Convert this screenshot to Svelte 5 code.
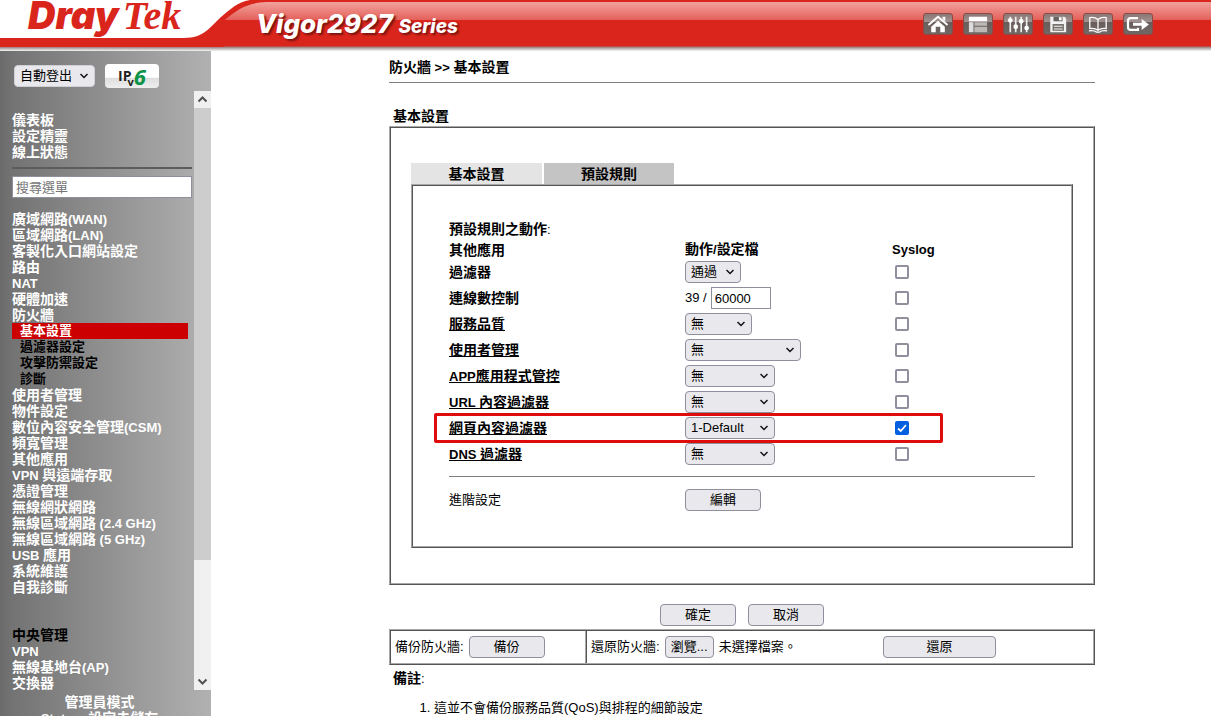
<script lang="ts">
  type Rule = {
    id: string;
    name: string;
    link: boolean;
    options?: string[];
    size?: string;
    marked?: boolean;
  };

  const statusLinks = ["儀表板", "設定精靈", "線上狀態"];
  const beforeFirewall = ["廣域網路(WAN)", "區域網路(LAN)", "客製化入口網站設定", "路由", "NAT", "硬體加速", "防火牆"];
  const firewallLinks = ["基本設置", "過濾器設定", "攻擊防禦設定", "診斷"];
  const afterFirewall = [
    "使用者管理", "物件設定", "數位內容安全管理(CSM)", "頻寬管理", "其他應用", "VPN 與遠端存取",
    "憑證管理", "無線網狀網路", "無線區域網路 (2.4 GHz)", "無線區域網路 (5 GHz)", "USB 應用",
    "系統維護", "自我診斷",
  ];
  const centralLinks = ["VPN", "無線基地台(AP)", "交換器"];

  const rules: Rule[] = [
    { id: "filter", name: "過濾器", link: false, options: ["通過", "封鎖"], size: "tiny" },
    { id: "sessions", name: "連線數控制", link: false },
    { id: "qos", name: "服務品質", link: true, options: ["無"], size: "small" },
    { id: "users", name: "使用者管理", link: true, options: ["無"], size: "large" },
    { id: "app", name: "APP應用程式管控", link: true, options: ["無"], size: "medium" },
    { id: "url", name: "URL 內容過濾器", link: true, options: ["無"], size: "medium" },
    { id: "web", name: "網頁內容過濾器", link: true, options: ["1-Default", "無"], size: "medium", marked: true },
    { id: "dns", name: "DNS 過濾器", link: true, options: ["無"], size: "medium" },
  ];

  let syslog: Record<string, boolean> = $state({ web: true });
  let sessions = $state("60000");
  let fileName = $state("未選擇檔案。");

  // Latin runs are set one size below the Chinese text
  function runs(text: string): string[] {
    return text.split(/([\x20-\x7e]+)/);
  }

  function pickFile(e: Event): void {
    const files = (e.currentTarget as HTMLInputElement).files;
    fileName = files && files[0] ? files[0].name : "未選擇檔案。";
  }
</script>

{#snippet mixed(text: string)}{#each runs(text) as part, i}{#if i % 2}<span class="latin">{part}</span>{:else}{part}{/if}{/each}{/snippet}

{#snippet menu(items: string[])}
  {#each items as item}
    <li><a href="#menu">{@render mixed(item)}</a></li>
  {/each}
{/snippet}

<div class="page">
  <header class="banner">
    <svg class="swoosh" width="280" height="47" viewBox="0 0 280 47" aria-hidden="true">
      <path d="M0 0H280V2H266C247 3 238 9 224 20.500V47H0Z" fill="#da251c" />
      <path d="M0 0H250C237 2 231 9 221 17C210 27 204 38 184 38H0Z" fill="#fff" />
    </svg>
    <div class="logo"><span class="dray">Dray</span><span class="tek">Tek</span></div>
    <h1 class="model">Vigor2927 <small>Series</small></h1>
    <nav class="tools">
      <button aria-label="首頁">
        <svg viewBox="0 0 30 22"><path d="M4.500 12L15 3L25.500 12" fill="none" stroke="#fff" stroke-width="2.200" /><path d="M20 3h3v5l-3-2.500zM15 7.500l7.500 6.500V20h-5v-6h-5v6h-5v-6z" fill="#fff" /></svg>
      </button>
      <button aria-label="版面">
        <svg viewBox="0 0 30 22"><path d="M5 3h20v5H5z" fill="#fff" /><path d="M5 9h5v11H5z" fill="#ddd" /><path d="M11 9h14v4H11zM11 14h14v6H11z" fill="#bcb8b6" /></svg>
      </button>
      <button aria-label="設定">
        <svg viewBox="0 0 30 22"><path d="M6.500 3v17M12.500 3v17M18.500 3v17M24.500 3v17" stroke="#eee" stroke-width="1.800" /><g fill="#fff"><circle cx="6.500" cy="7" r="2.600" /><circle cx="12.500" cy="14" r="2.600" /><circle cx="18.500" cy="8" r="2.600" /><circle cx="24.500" cy="15.500" r="2.600" /></g></svg>
      </button>
      <button aria-label="儲存">
        <svg viewBox="0 0 30 22"><path d="M6.500 3H22l2 2v15H6.500z" fill="#f2f2f2" /><path d="M10 3h10v5H10z" fill="#676260" /><path d="M16 3.500h3V7h-3z" fill="#fff" /><path d="M9 11h12.500v7.500H9z" fill="#77716f" /><path d="M10.500 13.500h9.500M10.500 16.500h9.500" stroke="#fff" /></svg>
      </button>
      <button aria-label="說明">
        <svg viewBox="0 0 30 22"><path d="M15 6C12.500 4 9 3.500 6 4v12c3-.5 6.500 0 9 2c2.500-2 6-2.500 9-2V4c-3-.5-6.500 0-9 2zV18M5 18.500c4-.5 7 0 8.500 1.500h3c1.500-1.500 4.500-2 8.500-1.500" fill="none" stroke="#fff" stroke-width="1.400" /></svg>
      </button>
      <button aria-label="登出">
        <svg viewBox="0 0 30 22"><path d="M15 4.500H7Q4 4.500 4 7.500v7Q4 17.500 7 17.500H15V15" fill="none" stroke="#fff" stroke-width="2.400" /><path d="M9.500 9.500h9.500V5.500l8 6L19 17.500v-4.500H9.500z" fill="#fff" /></svg>
      </button>
    </nav>
  </header>

  <div class="body">
    <aside class="sidebar">
      <div class="session">
        <select class="logout" aria-label="自動登出"><option>自動登出</option></select>
        <button class="ipv6" aria-label="IPv6"><span class="ip">IP</span><span class="v">v</span><span class="six">6</span></button>
      </div>
      <div class="scroller">
        <nav class="menu">
          <ul>{@render menu(statusLinks)}</ul>
          <hr />
          <input class="search" type="text" placeholder="搜尋選單" aria-label="搜尋選單" />
          <ul>
            {@render menu(beforeFirewall)}
            {#each firewallLinks as item, i}
              <li class="sub" class:active={i === 0}><a href="#firewall">{item}</a></li>
            {/each}
            {@render menu(afterFirewall)}
          </ul>
          <ul class="central">
            <li class="group">中央管理</li>
            {@render menu(centralLinks)}
          </ul>
        </nav>
        <div class="scrollbar" aria-hidden="true">
          <svg width="17" height="17" viewBox="0 0 17 17"><path d="M4.500 10.500L8.500 6.500L12.500 10.500" /></svg>
          <div class="track"><div class="thumb"></div></div>
          <svg width="17" height="17" viewBox="0 0 17 17"><path d="M4.500 6.500L8.500 10.500L12.500 6.500" /></svg>
        </div>
      </div>
      <footer class="mode">
        <div>管理員模式</div>
        <div>{@render mixed("Status: 設定未儲存")}</div>
      </footer>
    </aside>

    <main>
      <div class="crumbs">{@render mixed("防火牆 >> 基本設置")}</div>
      <h2>基本設置</h2>

      <section class="panel">
        <div class="tabs">
          <button class="tab">基本設置</button>
          <button class="tab selected">預設規則</button>
        </div>
        <div class="sheet">
          <table class="rules">
            <caption>{@render mixed("預設規則之動作:")}</caption>
            <colgroup><col class="name" /><col class="action" /><col /></colgroup>
            <thead>
              <tr><th>其他應用</th><th>{@render mixed("動作/設定檔")}</th><th>{@render mixed("Syslog")}</th></tr>
            </thead>
            <tbody>
              {#each rules as rule}
                <tr>
                  <th>
                    {#if rule.link}
                      <a href="#{rule.id}">{@render mixed(rule.name)}</a>
                    {:else}
                      {rule.name}
                    {/if}
                    {#if rule.marked}<span class="marker"></span>{/if}
                  </th>
                  <td>
                    {#if rule.options}
                      <select class={rule.size} aria-label={rule.name}>
                        {#each rule.options as option}<option>{option}</option>{/each}
                      </select>
                    {:else}
                      <label class="limit">39 / <input type="text" bind:value={sessions} /></label>
                    {/if}
                  </td>
                  <td class="log">
                    <input type="checkbox" bind:checked={syslog[rule.id]} aria-label="{rule.name} Syslog" />
                  </td>
                </tr>
              {/each}
            </tbody>
          </table>
          <div class="advanced">
            <span>進階設定</span>
            <button class="btn">編輯</button>
          </div>
        </div>
      </section>

      <div class="actions">
        <button class="btn">確定</button>
        <button class="btn">取消</button>
      </div>

      <div class="backup">
        <div class="save">備份防火牆: <button class="btn">備份</button></div>
        <div class="restore">
          <span>還原防火牆:</span>
          <label class="btn browse">瀏覽...<input type="file" onchange={pickFile} /></label>
          <span class="file">{fileName}</span>
          <button class="btn wide">還原</button>
        </div>
      </div>

      <h3>{@render mixed("備註:")}</h3>
      <ol>
        <li>這並不會備份服務品質(QoS)與排程的細節設定</li>
      </ol>
    </main>
  </div>
</div>

<style>
  :global(body) {
    margin: 0;
    background: #fff;
  }

  .page {
    display: flex;
    flex-direction: column;
    height: 100vh;
    overflow: hidden;
    color: #000;
    font-family: "Liberation Sans", "Noto Sans CJK TC", sans-serif;
    font-size: 13px;
    line-height: 16px;
  }

  .page * {
    box-sizing: border-box;
  }

  button, input, select {
    font: inherit;
    color: inherit;
    margin: 0;
  }

  a {
    color: inherit;
  }

  .latin {
    font-size: 13px;
  }

  /* banner */
  .banner {
    position: relative;
    display: flex;
    flex: none;
    height: 51px;
    padding-right: 58px;
    background: linear-gradient(#da251c 2px, #f2a29d 2px, #e4605a 20px, #da251c 20px, #da251c 46px, #9c7a78 47px, #c4c0c0 49px, #f4f4f4 51px);
  }

  .swoosh {
    position: absolute;
    left: 0;
    top: 0;
  }

  .logo {
    position: relative;
    width: 228px;
    padding-left: 28px;
    color: #da251c;
    font-style: italic;
    line-height: 30px;
    white-space: nowrap;
  }

  .dray {
    font-family: Inter, sans-serif;
    font-size: 38px;
    font-weight: 900;
  }

  .tek {
    margin-left: 4px;
    font-family: "Liberation Serif", serif;
    font-size: 40px;
    font-weight: 700;
  }

  .model {
    position: relative;
    flex: 1;
    margin: 0;
    padding-left: 28px;
    color: #fff;
    font-family: Inter, sans-serif;
    font-size: 26px;
    font-weight: 800;
    font-style: italic;
    line-height: 48px;
    text-shadow: 2px 2px 2px #7c1510;
    white-space: nowrap;
  }

  .model small {
    font-size: 19px;
  }

  .tools {
    display: flex;
    gap: 10px;
    padding-top: 13px;
  }

  .tools button {
    width: 30px;
    height: 22px;
    padding: 0;
    border: 1px solid #8d4a45;
    border-radius: 3px;
    background: linear-gradient(#8b7775, #a09391 8px, #685d5b 8px, #716866);
  }

  .tools svg {
    display: block;
    width: 28px;
    height: 20px;
  }

  /* sidebar */
  .body {
    display: flex;
    flex: 1;
    min-height: 0;
  }

  .sidebar {
    display: flex;
    flex: none;
    flex-direction: column;
    width: 211px;
    background: linear-gradient(90deg, #6b6b6b, #737373 12px, #b1b1b1);
    color: #fff;
    font-size: 14px;
    font-weight: 700;
  }

  .session {
    display: flex;
    align-items: center;
    gap: 10px;
    height: 40px;
    padding: 10px 14px 0;
  }

  .ipv6 {
    display: flex;
    align-items: center;
    justify-content: center;
    width: 54px;
    height: 24px;
    padding: 0;
    border: 0;
    border-radius: 4px;
    background: linear-gradient(#fff 55%, #dedede 60%, #eee);
    color: #222;
    font-family: "Open Sans", sans-serif;
  }

  .ipv6 .v {
    align-self: flex-end;
    margin-left: -4px;
    font-size: 11px;
    line-height: 12px;
  }

  .ipv6 .six {
    color: #0d9347;
    font-size: 22px;
    font-style: italic;
    line-height: 24px;
  }

  .scroller {
    display: flex;
    flex: 1;
    min-height: 0;
  }

  .menu {
    flex: 1;
    padding: 21px 2px 0 12px;
    overflow: hidden;
    white-space: nowrap;
  }

  .menu ul {
    margin: 0;
    padding: 0;
    list-style: none;
  }

  .menu a {
    display: block;
    height: 16px;
    text-decoration: none;
  }

  .menu hr {
    height: 2px;
    margin: 7px 0 7px;
    border: 0;
    background: #5c5c5c;
  }

  .search {
    display: block;
    width: 100%;
    height: 22px;
    margin-bottom: 13px;
    padding: 0 3px;
    border: 1px solid #8f8f9d;
    background: #fff;
    color: #000;
    font-size: 13px;
    font-weight: 400;
  }

  .search::placeholder {
    color: #757575;
  }

  .menu .sub {
    margin-right: 4px;
    padding-left: 8px;
    color: #000;
    font-size: 13px;
  }

  .menu .active {
    background: #c00;
    color: #fff;
  }

  .menu .central {
    margin-top: 32px;
  }

  .group {
    height: 16px;
    color: #000;
  }

  .scrollbar {
    display: flex;
    flex-direction: column;
    width: 17px;
    background: #f0f0f0;
  }

  .scrollbar path {
    fill: none;
    stroke: #505050;
    stroke-width: 2;
  }

  .track {
    flex: 1;
  }

  .thumb {
    height: 80%;
    background: #cdcdcd;
  }

  .mode {
    height: 26px;
    padding: 4px 12px 0 0;
    overflow: hidden;
    text-align: center;
  }

  /* shared controls */
  select {
    height: 22px;
    padding: 0 20px 0 5px;
    border: 1px solid #8f8f9d;
    border-radius: 4px;
    appearance: none;
    background: #e9e9ed url("data:image/svg+xml,%3Csvg xmlns='http://www.w3.org/2000/svg' width='8' height='6'%3E%3Cpath d='M.5 1L4 4.500L7.500 1' fill='none' stroke='%23111' stroke-width='1.500'/%3E%3C/svg%3E") no-repeat right 6px center;
    color: #000;
    font-size: 13px;
    font-weight: 400;
  }

  .logout {
    width: 81px;
    border-color: #d0d0d7;
  }

  .tiny {
    width: 56px;
  }

  .small {
    width: 67px;
  }

  .medium {
    width: 90px;
  }

  .large {
    width: 116px;
  }

  .btn {
    width: 76px;
    height: 22px;
    padding: 0;
    border: 1px solid #8f8f9d;
    border-radius: 4px;
    background: #e9e9ed;
    text-align: center;
  }

  /* content */
  main {
    flex: 1;
    min-width: 0;
    padding: 8px 116px 0 178px;
  }

  .crumbs {
    height: 24px;
    border-bottom: 1px solid #808080;
    font-size: 14px;
    font-weight: 700;
  }

  h2 {
    margin: 25px 0 2px;
    padding-left: 4px;
    font-size: 14px;
    line-height: 16px;
  }

  .panel {
    padding: 35px 20px;
    border: 2px ridge #a8a8a8;
  }

  .tabs {
    display: flex;
    gap: 2px;
  }

  .tab {
    width: 131px;
    height: 21px;
    padding: 0;
    border: 0;
    background: #e4e4e4;
    font-size: 14px;
    font-weight: 700;
  }

  .tab.selected {
    width: 130px;
    background: #c4c4c4;
  }

  .sheet {
    padding: 33px 36px 35px;
    border: 2px ridge #a8a8a8;
  }

  .rules {
    width: 100%;
    table-layout: fixed;
    border-collapse: collapse;
  }

  .rules caption,
  .rules th {
    font-size: 14px;
    font-weight: 700;
    text-align: left;
  }

  .rules caption {
    line-height: 20px;
  }

  .rules caption .latin,
  h3 .latin {
    font-weight: 400;
  }

  .name {
    width: 236px;
  }

  .action {
    width: 207px;
  }

  .rules tr {
    position: relative;
    height: 26px;
  }

  .rules thead tr {
    height: 19px;
  }

  .rules th,
  .rules td {
    padding: 0;
    vertical-align: middle;
  }

  .rules select,
  .log input {
    display: block;
  }

  .limit {
    display: flex;
    align-items: center;
    gap: 4px;
  }

  .limit input {
    width: 60px;
    height: 22px;
    padding: 0 3px;
    border: 1px solid #8f8f9d;
    background: #fff;
  }

  .log input {
    width: 14px;
    height: 14px;
    margin-left: 3px;
    border: 2px solid #8f8f9d;
    border-radius: 2px;
    appearance: none;
    background: #fff;
  }

  .log input:checked {
    border-color: #0060df;
    background: #0060df url("data:image/svg+xml,%3Csvg xmlns='http://www.w3.org/2000/svg' width='10' height='10'%3E%3Cpath d='M1 5.500L3.800 8L9 2' fill='none' stroke='%23fff' stroke-width='1.800'/%3E%3C/svg%3E") no-repeat center;
  }

  .marker {
    position: absolute;
    inset: -2px 92px -2px -15px;
    border: 3px solid #e00c0c;
    border-radius: 2px;
    pointer-events: none;
  }

  .advanced {
    display: flex;
    align-items: center;
    margin-top: 9px;
    padding-top: 12px;
    border-top: 1px solid #808080;
  }

  .advanced span {
    width: 236px;
  }

  .actions {
    display: flex;
    justify-content: center;
    gap: 12px;
    padding: 19px 0 3px;
  }

  .backup {
    display: flex;
    border: 2px ridge #a8a8a8;
    white-space: nowrap;
  }

  .save,
  .restore {
    display: flex;
    align-items: center;
    gap: 5px;
    height: 32px;
    padding-left: 4px;
  }

  .save {
    width: 194px;
  }

  .restore {
    flex: 1;
    padding-right: 97px;
    border-left: 2px ridge #a8a8a8;
  }

  .browse {
    width: 49px;
    line-height: 20px;
  }

  .browse input {
    position: absolute;
    width: 1px;
    height: 1px;
    opacity: 0;
  }

  .file {
    flex: 1;
  }

  .wide {
    width: 113px;
  }

  h3 {
    margin: 5px 0 13px;
    padding-left: 4px;
    font-size: 14px;
    line-height: 16px;
  }

  ol {
    margin: 0;
    padding-left: 45px;
  }
</style>
